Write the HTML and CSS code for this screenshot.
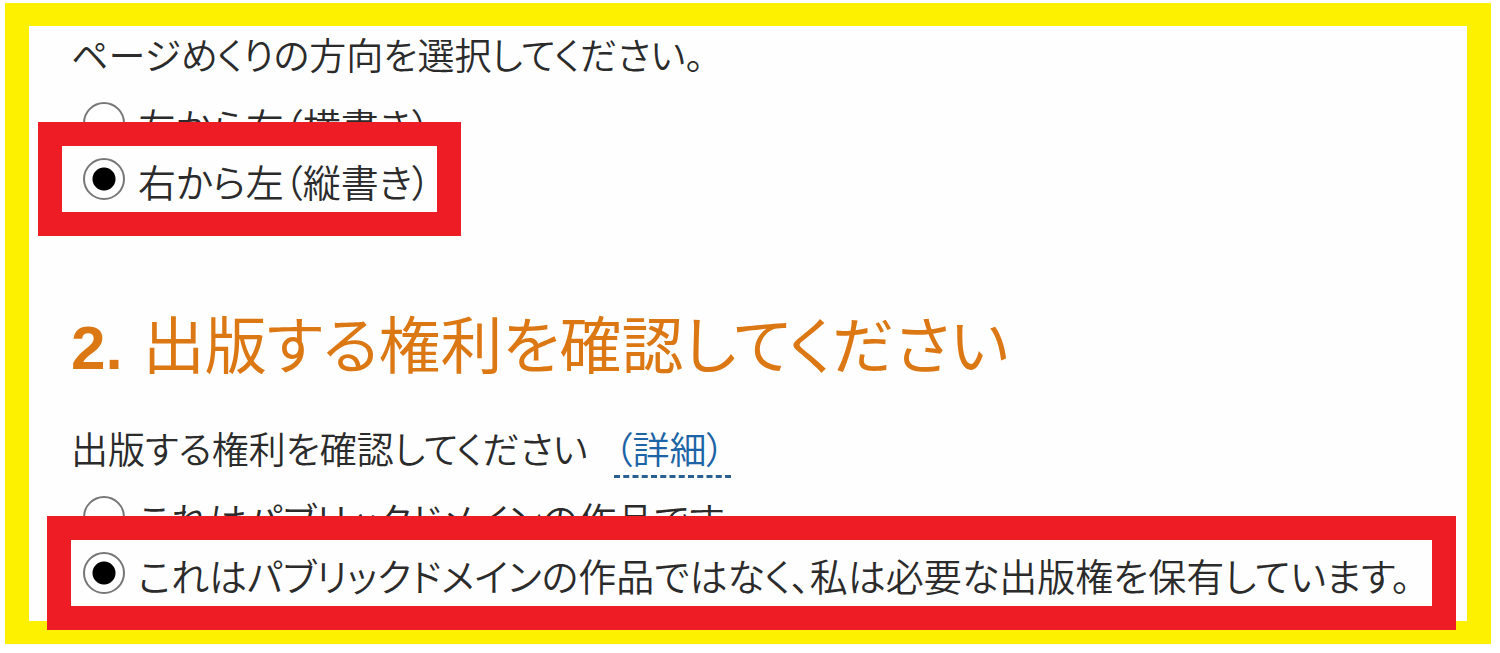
FILE: index.html
```html
<!DOCTYPE html>
<html lang="ja">
<head>
<meta charset="utf-8">
<title>出版する権利の確認</title>
<link rel="stylesheet" href="styles.css">
</head>
<body>
<main class="frame">
  <p class="lead" id="direction">ページめくりの方向を選択してください。</p>
  <div class="options" role="radiogroup" aria-labelledby="direction">
    <label class="option"><input class="radio" type="radio" name="direction"><span class="text">左から右（横書き）</span></label>
    <label class="option highlight highlight-fit"><input class="radio" type="radio" name="direction" checked><span class="text">右から左（縦書き）</span></label>
  </div>
  <h1 class="title"><span class="number">2.</span><span>出版する権利を確認してください</span></h1>
  <p class="lead" id="rights">出版する権利を確認してください <a class="detail" href="#rights">（詳細）</a></p>
  <div class="options" role="radiogroup" aria-labelledby="rights">
    <label class="option"><input class="radio" type="radio" name="rights"><span class="text">これはパブリックドメインの作品です</span></label>
    <label class="option highlight highlight-wide"><input class="radio" type="radio" name="rights" checked><span class="text">これはパブリックドメインの作品ではなく、私は必要な出版権を保有しています。</span></label>
  </div>
</main>
</body>
</html>
```
FILE: styles.css
```css
* { box-sizing: border-box; }
body {
  margin: 0;
  padding: 3px 9px 8px 5px;
  background: #fff;
  color: #2b2b2b;
  font-family: "Noto Sans CJK JP", sans-serif;
  font-size: 37px;
  font-weight: 350;
  font-feature-settings: "palt";
}
.frame {
  display: flex;
  flex-direction: column;
  padding: 0 11px 0 42px;
  border: 23px solid #fdf100;
  border-left-width: 24px;
  border-right-width: 24px;
  background: #fefefe;
}
.lead {
  margin: 0 0 12px;
  line-height: 56px;
  white-space: nowrap;
}
.options {
  display: flex;
  flex-direction: column;
  font-size: 38px;
}
.option {
  display: flex;
  align-items: center;
  gap: 13px;
  height: 57px;
  padding-left: 12px;
  line-height: 56px;
  white-space: nowrap;
}
.text {
  padding-top: 4px;
}
.highlight {
  position: relative;
  height: 114px;
  margin-top: -29px;
  border: 24px solid #ee1c24;
  background: #fefefe;
}
.highlight-fit {
  align-self: flex-start;
  margin-left: -33px;
  padding: 0 6px 0 21px;
}
.highlight-wide {
  margin-left: -24px;
  margin-bottom: -9px;
  padding-left: 12px;
}
.radio {
  appearance: none;
  flex: none;
  width: 42px;
  height: 42px;
  margin: 0;
  border: 2px solid #777;
  border-radius: 50%;
  background: #fff;
}
.radio:checked {
  background: radial-gradient(circle, #000 11px, #fff 12px);
}
.title {
  display: flex;
  align-items: baseline;
  gap: 20px;
  margin: 66px 0 32px;
  color: #dc7814;
  font-size: 62px;
  font-weight: 400;
  line-height: 80px;
  white-space: nowrap;
}
.number {
  font-family: "Liberation Sans", sans-serif;
  font-weight: 700;
}
.detail {
  margin-left: 18px;
  padding-right: 6px;
  color: #1c64a5;
  text-decoration: none;
  border-bottom: 3px dashed #2a5f92;
}
```
